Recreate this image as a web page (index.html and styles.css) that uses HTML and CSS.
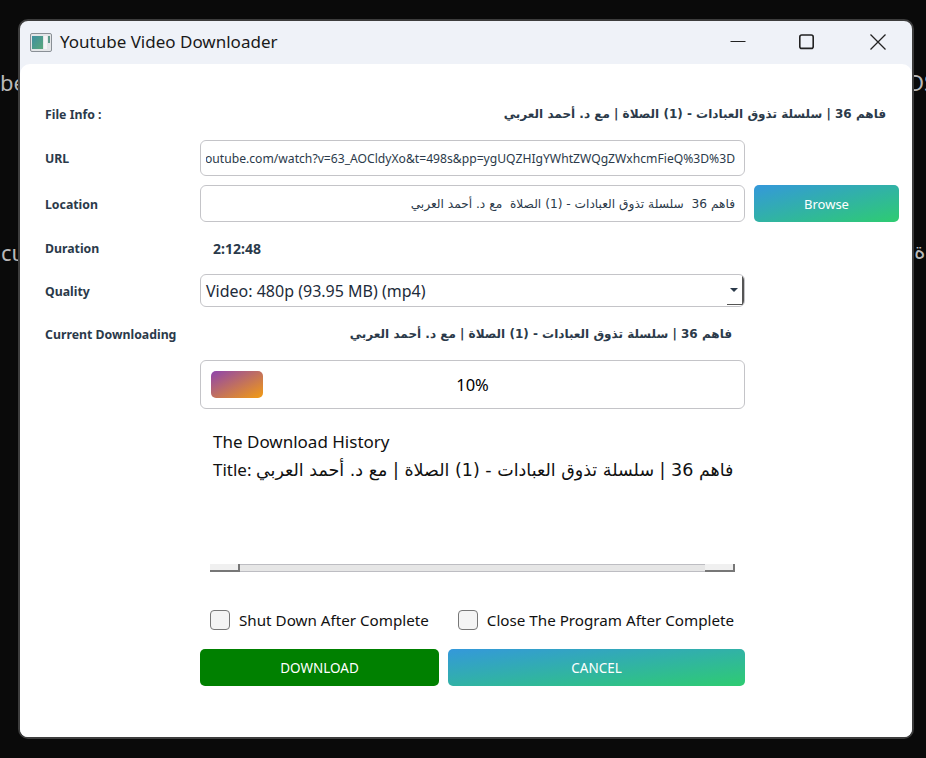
FILE: index.html
```html
<!DOCTYPE html>
<html lang="en">
<head>
    <meta charset="UTF-8">
    <meta name="viewport" content="width=device-width, initial-scale=1.0">
    <title>Youtube Video Downloader</title>
    <link rel="stylesheet" href="styles.css">
</head>
<body>
    <!-- text of the window behind -->
    <span class="behind behind-a">be</span>
    <span class="behind behind-b">cu</span>
    <span class="behind behind-c">DS</span>
    <span class="behind behind-d ar">ة</span>

    <div class="window">
        <div class="titlebar">
            <svg class="app-icon" width="22" height="19" viewBox="0 0 22 19">
                <defs>
                    <linearGradient id="pic" x1="0" y1="0" x2="1" y2="1">
                        <stop offset="0" stop-color="#3f8fa0"/>
                        <stop offset="1" stop-color="#5aa87a"/>
                    </linearGradient>
                </defs>
                <rect x="0.5" y="0.5" width="21" height="18" rx="1.5" fill="#e4e6e8" stroke="#8a9096"/>
                <rect x="2" y="3" width="11" height="13" fill="url(#pic)"/>
                <rect x="14" y="3" width="3" height="13" fill="#f4f5f5"/>
                <rect x="18" y="3" width="2" height="7" fill="#5f9a8a"/>
            </svg>
            <span class="app-title">Youtube Video Downloader</span>
            <div class="win-controls">
                <svg class="win-btn" width="16" height="16" viewBox="0 0 16 16"><path d="M0.5 7.5H15.5" stroke="#222" stroke-width="1.2" fill="none"/></svg>
                <svg class="win-btn win-btn-max" width="16" height="16" viewBox="0 0 16 16"><rect x="0.8" y="1" width="13.4" height="13.4" rx="2" stroke="#222" stroke-width="1.6" fill="none"/></svg>
                <svg class="win-btn" width="16" height="16" viewBox="0 0 16 16"><path d="M0.5 0.5L15.5 15.5M15.5 0.5L0.5 15.5" stroke="#222" stroke-width="1.3" fill="none"/></svg>
            </div>
        </div>

        <div class="content">
            <div class="row row-info">
                <span class="label">File Info :</span>
                <span class="value-wide ar" dir="rtl">فاهم 36 | سلسلة تذوق العبادات - (1) الصلاة | مع د. أحمد العربي</span>
            </div>

            <div class="row row-url">
                <span class="label">URL</span>
                <div class="field url-field">
                    <div class="url-text"><span>https://www.youtube.com/watch?v=63_AOCldyXo&amp;t=498s&amp;pp=ygUQZHIgYWhtZWQgZWxhcmFieQ%3D%3D</span></div>
                </div>
            </div>

            <div class="row row-location">
                <span class="label label-low">Location</span>
                <div class="field location-field ar" dir="rtl">فاهم 36&nbsp; سلسلة تذوق العبادات - (1) الصلاة&nbsp; مع د. أحمد العربي</div>
                <button class="btn btn-grad btn-browse" type="button">Browse</button>
            </div>

            <div class="row row-duration">
                <span class="label">Duration</span>
                <span class="duration">2:12:48</span>
            </div>

            <div class="row row-quality">
                <span class="label label-low">Quality</span>
                <div class="field select-field">
                    <span>Video: 480p (93.95 MB) (mp4)</span>
                    <div class="select-arrow"><i></i></div>
                </div>
            </div>

            <div class="row row-current">
                <span class="label">Current Downloading</span>
                <span class="current-title ar" dir="rtl">فاهم 36 | سلسلة تذوق العبادات - (1) الصلاة | مع د. أحمد العربي</span>
            </div>

            <div class="row row-progress">
                <div class="progress">
                    <div class="progress-chunk"></div>
                    <span class="progress-text">10%</span>
                </div>
            </div>

            <div class="row row-history">
                <div class="history">
                    <div class="history-text">
                        <p>The Download History</p>
                        <p>Title: <span class="ar">فاهم 36 | سلسلة تذوق العبادات - (1) الصلاة | مع د. أحمد العربي</span></p>
                    </div>
                    <div class="hscroll">
                        <div class="hscroll-end"></div>
                        <div class="hscroll-track"></div>
                        <div class="hscroll-end"></div>
                    </div>
                </div>
            </div>

            <div class="row row-checks">
                <div class="checks">
                    <label class="check"><input type="checkbox"><span>Shut Down After Complete</span></label>
                    <label class="check"><input type="checkbox"><span>Close The Program After Complete</span></label>
                </div>
            </div>

            <div class="row row-actions">
                <div class="actions">
                    <button class="btn btn-download" type="button">DOWNLOAD</button>
                    <button class="btn btn-grad btn-cancel" type="button">CANCEL</button>
                </div>
            </div>
        </div>
    </div>
</body>
</html>
```

FILE: styles.css
```css
* {
    box-sizing: border-box;
}

html, body {
    height: 100%;
}

body {
    margin: 0;
    padding: 19px 12px 19px 18px;
    background-color: #0a0a0a;
    font-family: 'Noto Sans', 'DejaVu Sans', sans-serif;
    color: #000;
    overflow: hidden;
    position: relative;
}

p {
    margin: 0;
}

.ar {
    font-family: 'DejaVu Sans', sans-serif;
}

.behind {
    position: absolute;
    color: #b9b9b9;
    font-size: 22px;
    line-height: 28px;
}

.behind-a { left: 0; top: 68px; }
.behind-b { left: 1px; top: 238px; }
.behind-c { left: 908px; top: 68px; }
.behind-d { left: 914px; top: 238px; }

.window {
    position: relative;
    width: 896px;
    height: 720px;
    border: 2px solid #3d3d3d;
    border-radius: 10px;
    background-color: #eff2f8;
    overflow: hidden;
    display: flex;
    flex-direction: column;
}

.titlebar {
    height: 43px;
    flex-shrink: 0;
    display: flex;
    align-items: center;
    padding: 0 0 2px 10px;
}

.app-icon {
    margin-right: 8px;
    margin-top: 1px;
}

.app-title {
    font-size: 17px;
    color: #1a1a1a;
}

.win-controls {
    margin-left: auto;
    display: flex;
    align-items: center;
    gap: 54px;
    padding-right: 26px;
}

.win-btn-max {
    margin-left: -1px;
    margin-right: 1px;
}

.content {
    flex: 1;
    background-color: #fff;
    border-radius: 10px 10px 0 0;
    padding: 36px 0 0 25px;
}

.row {
    display: grid;
    grid-template-columns: 155px 545px 9px 145px;
    align-items: center;
}

.label {
    grid-column: 1;
    font-size: 12.3px;
    font-weight: 700;
    color: #2b3a4a;
}

.label-low {
    padding-top: 2px;
}

.row-info { height: 28px; margin-bottom: 12px; }
.row-url { height: 36px; margin-bottom: 9px; }
.row-location { height: 37px; margin-bottom: 14px; }
.row-duration { height: 24px; margin-bottom: 14px; }
.row-quality { height: 33px; margin-bottom: 15px; }
.row-current { height: 24px; margin-bottom: 14px; }
.row-progress { height: 49px; margin-bottom: 11px; }
.row-history { height: 155px; margin-bottom: 35px; align-items: start; }
.row-checks { height: 20px; margin-bottom: 19px; }
.row-actions { height: 37px; }

.value-wide {
    grid-column: 2 / 5;
    font-size: 12px;
    font-weight: 700;
    color: #2b3a4a;
    padding-right: 13px;
}

.field {
    grid-column: 2;
    height: 100%;
    border: 1px solid #c4c4c8;
    border-radius: 6px;
    background-color: #fff;
    display: flex;
    align-items: center;
    font-size: 12.1px;
    color: #2b3a4a;
    overflow: hidden;
}

.url-field {
    padding: 0 9px 0 5px;
}

.url-text {
    flex: 1;
    min-width: 0;
    display: flex;
    justify-content: flex-end;
    overflow: hidden;
    white-space: nowrap;
    font-size: 12.15px;
}

.location-field {
    padding: 0 9px;
    font-size: 12.2px;
}

.btn {
    border: none;
    border-radius: 5px;
    color: #fff;
    font-family: 'Noto Sans', sans-serif;
    font-size: 13.5px;
    height: 100%;
    padding: 0;
}

.btn-grad {
    background-image: linear-gradient(to bottom right, #3498db, #2ecc71);
}

.btn-browse {
    grid-column: 4;
    font-size: 13px;
}

.duration {
    grid-column: 2;
    padding-left: 13px;
    font-size: 14px;
    font-weight: 700;
    color: #2b3a4a;
}

.select-field {
    position: relative;
    padding-left: 5px;
    font-size: 16px;
    color: #1d2b3a;
}

.select-arrow {
    position: absolute;
    right: 0;
    top: 0;
    bottom: 1px;
    width: 17px;
    border-right: 2px solid #555;
    border-bottom: 1px solid #555;
}

.select-arrow i {
    position: absolute;
    left: 3px;
    top: 13px;
    border: 4px solid transparent;
    border-top: 4px solid #2b3a4a;
    border-bottom: none;
}

.current-title {
    grid-column: 2;
    font-size: 12px;
    font-weight: 700;
    color: #2b3a4a;
    padding-right: 13px;
}

.progress {
    grid-column: 2;
    height: 100%;
    border: 1px solid #c4c4c8;
    border-radius: 6px;
    position: relative;
    display: flex;
    align-items: center;
    justify-content: center;
}

.progress-chunk {
    position: absolute;
    left: 10px;
    top: 10px;
    width: 52px;
    height: 27px;
    border-radius: 5px;
    background-image: linear-gradient(to bottom right, #8e44ad, #f39c12);
}

.progress-text {
    font-size: 16.5px;
}

.history {
    grid-column: 2;
    height: 100%;
    padding: 8px 10px 0;
    display: flex;
    flex-direction: column;
}

.history-text {
    flex: 1;
    padding-left: 3px;
    font-size: 17px;
    line-height: 28px;
    color: #111;
    white-space: nowrap;
}

.history-text .ar {
    font-size: 17.5px;
}

.hscroll {
    height: 8px;
    display: flex;
    margin-bottom: 3px;
}

.hscroll-end {
    width: 30px;
    height: 8px;
    background-color: #f0f0f0;
    border-bottom: 2px solid #777;
    border-right: 2px solid #777;
}

.hscroll-track {
    flex: 1;
    background-color: #e6e6e6;
    border-top: 1px solid #bdbdc2;
    border-bottom: 1px solid #bdbdc2;
}

.checks {
    grid-column: 2;
    display: flex;
    padding-left: 10px;
    gap: 29px;
}

.check {
    display: flex;
    align-items: center;
    font-size: 15.2px;
    color: #111;
    gap: 9px;
    white-space: nowrap;
}

.check input {
    appearance: none;
    width: 20px;
    height: 20px;
    margin: 0;
    border: 1.5px solid #777;
    border-radius: 4px;
    background-color: #f4f4f4;
}

.actions {
    grid-column: 2;
    display: flex;
    gap: 9px;
    height: 37px;
}

.btn-download {
    width: 239px;
    background-color: #008000;
}

.btn-cancel {
    flex: 1;
}
```
